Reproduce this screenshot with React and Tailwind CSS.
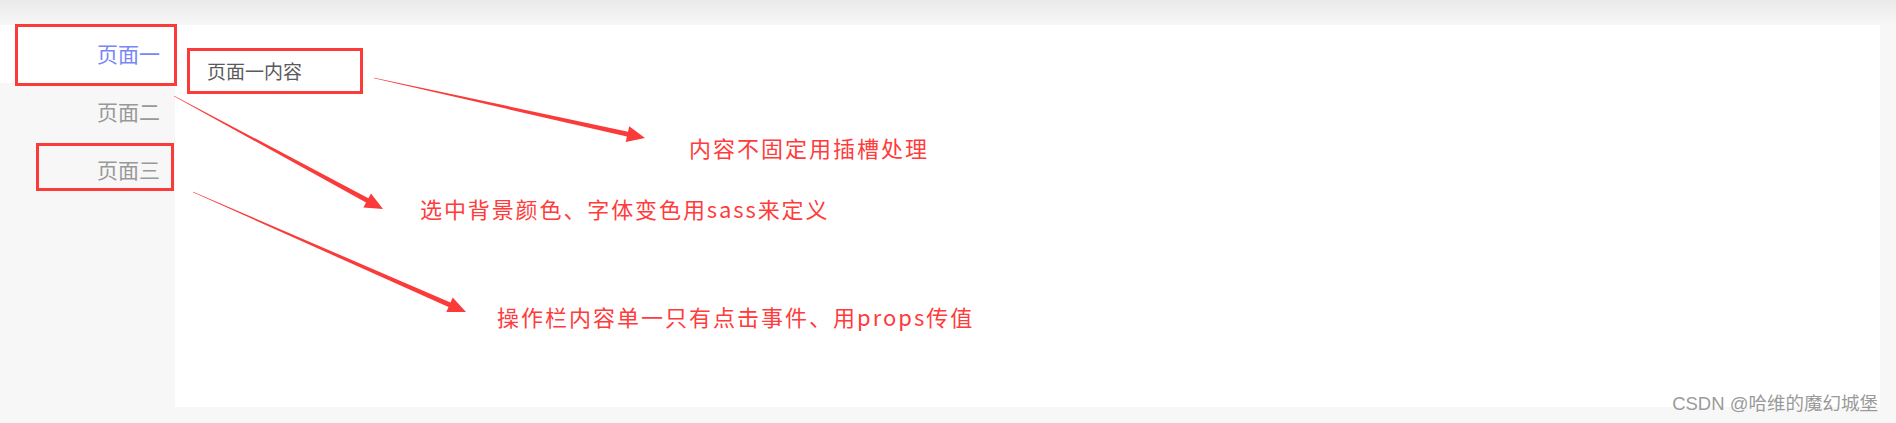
const CJK = "font-['Microsoft_YaHei','Noto_Sans_CJK_SC',sans-serif]";

const tabs = [
  { key: "one", label: "页面一" },
  { key: "two", label: "页面二" },
  { key: "three", label: "页面三" },
];

// tapered screenshot-tool arrow: thin tail, thick shaft, solid head
function arrowPoints([sx, sy], [tx, ty], { w0 = 0.6, w1 = 5, len = 18, half = 8 } = {}) {
  const dx = tx - sx;
  const dy = ty - sy;
  const d = Math.hypot(dx, dy);
  const ux = dx / d;
  const uy = dy / d;
  const nx = -uy;
  const ny = ux;
  const bx = tx - ux * len;
  const by = ty - uy * len;
  const pts = [
    [sx + (nx * w0) / 2, sy + (ny * w0) / 2],
    [bx + (nx * w1) / 2, by + (ny * w1) / 2],
    [bx + nx * half, by + ny * half],
    [tx, ty],
    [bx - nx * half, by - ny * half],
    [bx - (nx * w1) / 2, by - (ny * w1) / 2],
    [sx - (nx * w0) / 2, sy - (ny * w0) / 2],
  ];
  return pts.map(([x, y]) => `${x.toFixed(1)},${y.toFixed(1)}`).join(" ");
}

const arrows = [
  { from: [374, 78], to: [645, 138] },
  { from: [174, 96], to: [383, 209] },
  { from: [193, 192], to: [466, 312] },
];

function Sidebar({ active = "one" }) {
  return (
    <div className="w-[175px] shrink-0 bg-[#f7f7f7]">
      {tabs.map((tab) => (
        <div
          key={tab.key}
          className={`h-[58px] flex items-center justify-end pr-[15px] text-[21px] cursor-pointer ${
            tab.key === active ? "bg-white text-[#7886f7]" : "text-[#999999]"
          }`}
        >
          {tab.label}
        </div>
      ))}
    </div>
  );
}

export default function App() {
  return (
    <div className={`relative w-[1896px] h-[423px] overflow-hidden bg-[#f7f7f7] ${CJK}`}>
      <div className="h-[25px] bg-gradient-to-b from-[#e9e9e9] to-[#f7f7f7]" />

      <div className="flex h-[382px] pr-[16px]">
        <Sidebar active="one" />
        <div className="flex-1 bg-white pl-[32px] pt-[32px]">
          <p className="text-[19px] leading-[28px] text-[#5a5a5a]">页面一内容</p>
        </div>
      </div>

      {/* annotation layer */}
      <div className="absolute left-[15px] top-[24px] w-[162px] h-[62px] border-[3px] border-[#fb3a3a]" />
      <div className="absolute left-[36px] top-[143px] w-[138px] h-[48px] border-[3px] border-[#fb3a3a]" />
      <div className="absolute left-[187px] top-[48px] w-[176px] h-[46px] border-[3px] border-[#fb3a3a]" />

      <svg className="absolute inset-0" width="1896" height="423">
        {arrows.map((a, i) => (
          <polygon key={i} points={arrowPoints(a.from, a.to)} fill="#fb3a3a" />
        ))}
      </svg>

      <p className="absolute left-[689px] top-[132px] text-[22px] leading-[30px] tracking-[2px] text-[#ff3b3b]">
        内容不固定用插槽处理
      </p>
      <p className="absolute left-[420px] top-[193px] text-[22px] leading-[30px] tracking-[1.9px] text-[#ff3b3b]">
        选中背景颜色、字体变色用sass来定义
      </p>
      <p className="absolute left-[497px] top-[301px] text-[22px] leading-[30px] tracking-[2px] text-[#ff3b3b]">
        操作栏内容单一只有点击事件、用props传值
      </p>

      <p className="absolute right-[18px] top-[391px] text-[18.5px] leading-[26px] text-[#9a9a9a] font-['Liberation_Sans','Noto_Sans_CJK_SC',sans-serif] [text-shadow:0_0_2px_#fff]">
        CSDN @哈维的魔幻城堡
      </p>
    </div>
  );
}
